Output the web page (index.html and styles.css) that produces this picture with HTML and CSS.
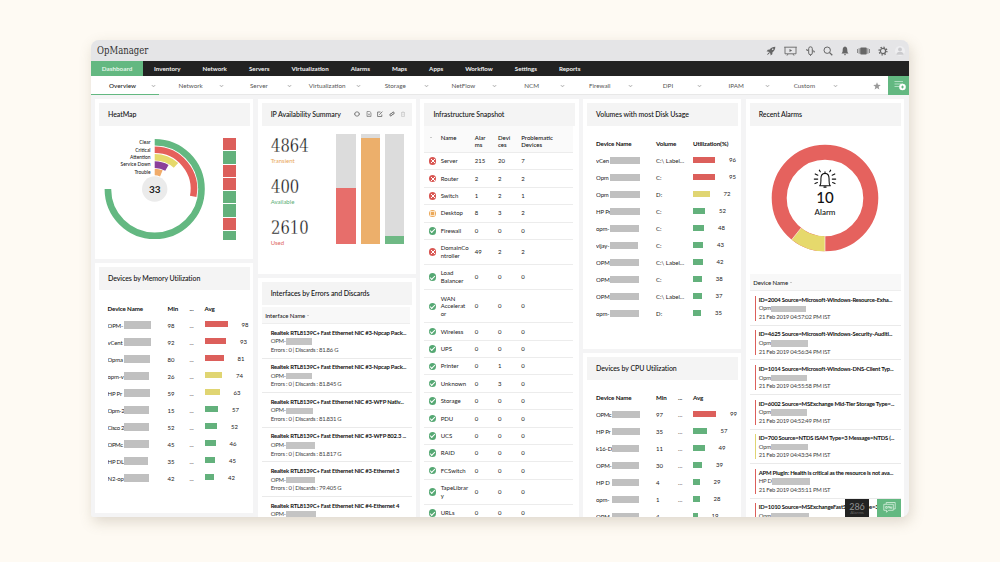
FILE: index.html
```html
<!DOCTYPE html>
<html lang="en">
<head>
<meta charset="utf-8">
<title>OpManager</title>
<link rel="stylesheet" href="styles.css">
</head>
<body>
<div class="window">
  <header class="top">
    <div class="brand">OpManager</div>
    <div class="tools">
      <svg width="10" height="10" viewBox="0 0 10 10"><path d="M9.3.7C6.8.7 5 1.700 3.700 3.500L1.800 3.700.6 5.400l1.700.1 2.200 2.200.1 1.700 1.700-1.200.2-1.900C8.300 5 9.300 3.200 9.300.7z" fill="#666"/><circle cx="6.700" cy="3.300" r=".8" fill="#e5e5e7"/><path d="M2.500 6.500L.8 9.200l2.700-1.700z" fill="#666"/></svg>
      <svg width="13" height="10" viewBox="0 0 13 10" fill="none" stroke="#666" stroke-width=".9"><path d="M.2 1.200h12.600M1 1.200v6.600h11V1.200M3 9.600l1-1.600M10 9.600L9 8"/><path d="M5.500 3v3l2.600-1.500z" fill="#666" stroke="none"/></svg>
      <svg width="9" height="10" viewBox="0 0 9 10" fill="none" stroke="#666" stroke-width="1"><path d="M2.700 7V2.600a1.800 1.800 0 0 1 3.600 0V7a1.800 1.800 0 0 1-3.600 0zM.8 3v1.400h1.400M8.200 6.500V5H6.800M4.500 8.500v1.300"/></svg>
      <svg width="10" height="10" viewBox="0 0 10 10" fill="none" stroke="#666"><circle cx="4.200" cy="4.200" r="3.200" stroke-width="1"/><path d="M6.600 6.600L9.300 9.300" stroke-width="1.300"/></svg>
      <svg width="8" height="10" viewBox="0 0 8 10" fill="#666"><path d="M4 .6c-1.800.4-2.300 2-2.300 3.400C1.700 6 1.200 6.500.5 7.600h7C6.800 6.500 6.300 6 6.300 4 6.300 2.600 5.800 1 4 .6zM3 8.200h2c0 1.400-2 1.400-2 0z"/></svg>
      <svg width="13" height="10" viewBox="0 0 13 10" fill="#666"><rect x="3.200" y="1.500" width="6.600" height="7" rx="1"/><path d="M1.700 2.300h.8v5.400h-.8zM.2 3h.7v4H.2zM10.500 2.300h.8v5.400h-.8zM12.100 3h.7v4h-.7z"/></svg>
      <svg width="10" height="10" viewBox="0 0 10 10" fill="none" stroke="#666"><circle cx="5" cy="5" r="2.600" stroke-width="1.200"/><circle cx="5" cy="5" r="3.900" stroke-width="1.300" stroke-dasharray="1.400 1.663"/></svg>
      <svg class="avatar" width="10" height="10" viewBox="0 0 10 10"><circle cx="5" cy="5" r="5" fill="#eeeef0"/><circle cx="5" cy="3.400" r="1.900" fill="#cbcbce"/><path d="M1.300 8.700c0-4 7.400-4 7.400 0z" fill="#cbcbce"/></svg>
    </div>
  </header>
  <nav class="nav">
    <a class="on">Dashboard</a><a>Inventory</a><a>Network</a><a>Servers</a><a>Virtualization</a><a>Alarms</a><a>Maps</a><a>Apps</a><a>Workflow</a><a>Settings</a><a>Reports</a>
  </nav>
  <div class="sub">
    <div class="tab on"><span>Overview</span><i class="chev"></i></div>
    <div class="tab"><span>Network</span><i class="chev"></i></div>
    <div class="tab"><span>Server</span><i class="chev"></i></div>
    <div class="tab"><span>Virtualization</span><i class="chev"></i></div>
    <div class="tab"><span>Storage</span><i class="chev"></i></div>
    <div class="tab"><span>NetFlow</span><i class="chev"></i></div>
    <div class="tab"><span>NCM</span><i class="chev"></i></div>
    <div class="tab"><span>Firewall</span><i class="chev"></i></div>
    <div class="tab"><span>DPI</span><i class="chev"></i></div>
    <div class="tab"><span>IPAM</span><i class="chev"></i></div>
    <div class="tab"><span>Custom</span><i class="chev"></i></div>
    <div class="end">
      <svg width="8" height="8" viewBox="0 0 8 8"><path d="M4 .2l1 2.600 2.800.1-2.200 1.800.8 2.800L4 5.900 1.600 7.500l.8-2.800L.2 2.900 3 2.800z" fill="#999"/></svg>
      <div class="add"><svg width="12" height="11" viewBox="0 0 12 11"><path d="M.5 1.500h8.500M.5 4h8.500M.5 6.500h5" stroke="#b9e2c8" stroke-width=".9"/><circle cx="8.500" cy="7" r="3.300" fill="#fff"/><path d="M8.500 5.600v2.800M7.100 7h2.800" stroke="#63b881" stroke-width="1"/></svg></div>
    </div>
  </div>

  <main class="board">
    <div class="col">
      <section class="card heat">
        <h2>HeatMap</h2>
        <div class="heatbody">
          <svg class="rings" width="108" height="104" viewBox="0 0 108 104">
            <g transform="translate(55.700 52)" fill="none" stroke-width="6.600">
              <path d="M0-46.800A46.800 46.800 0 1 1-46.800 0" stroke="#63b881"/>
              <path d="M0-39.200A39.200 39.200 0 0 1 38.480 7.480" stroke="#e5605b"/>
              <path d="M0-31.800A31.800 31.800 0 0 1 21.280-23.630" stroke="#e6d96c"/>
              <path d="M0-24.400A24.400 24.400 0 0 1 12.200-21.130" stroke="#8b3f9a"/>
              <path d="M0-17A17 17 0 0 1 6.640-15.650" stroke="#f0ab6a"/>
              <circle r="12.700" fill="#ebebeb" stroke="none"/>
            </g>
            <g class="ringlabels" text-anchor="end">
              <text x="51.500" y="7.300">Clear</text><text x="51.500" y="14.700">Critical</text><text x="51.500" y="22">Attention</text><text x="51.500" y="29.300">Service Down</text><text x="51.500" y="36.700">Trouble</text>
            </g>
            <text class="ringtotal" x="55.700" y="55.600" text-anchor="middle">33</text>
          </svg>
          <div class="squares"><i class="red"></i><i class="green"></i><i class="red"></i><i class="red"></i><i class="green"></i><i class="green"></i><i class="red"></i><i class="green last"></i></div>
        </div>
      </section>
      <section class="card memory">
        <h2>Devices by Memory Utilization</h2>
        <div class="util">
          <div class="r head"><b>Device Name</b><b>Min</b><b>...</b><b>Avg</b></div>
          <div class="r"><span class="nm"><em>OPM-</em><i style="width:27px"></i></span><span>98</span><span>...</span><span class="m"><i class="red" style="width:23px"></i>98</span></div>
          <div class="r"><span class="nm"><em>vCent</em><i style="width:27px"></i></span><span>92</span><span>...</span><span class="m"><i class="red" style="width:21.500px"></i>93</span></div>
          <div class="r"><span class="nm"><em>Opma</em><i style="width:26px"></i></span><span>80</span><span>...</span><span class="m"><i class="red" style="width:19px"></i>81</span></div>
          <div class="r"><span class="nm"><em>opm-v</em><i style="width:25px"></i></span><span>26</span><span>...</span><span class="m"><i class="yellow" style="width:17.500px"></i>74</span></div>
          <div class="r"><span class="nm"><em>HP Pr</em><i style="width:26px"></i></span><span>59</span><span>...</span><span class="m"><i class="yellow" style="width:15px"></i>63</span></div>
          <div class="r"><span class="nm tight"><em>Opm-2</em><i style="width:25px"></i></span><span>15</span><span>...</span><span class="m"><i class="green" style="width:13.500px"></i>57</span></div>
          <div class="r"><span class="nm tight"><em>Cisco 2</em><i style="width:25px"></i></span><span>52</span><span>...</span><span class="m"><i class="green" style="width:12.500px"></i>52</span></div>
          <div class="r"><span class="nm tight"><em>OPMc</em><i style="width:25px"></i></span><span>45</span><span>...</span><span class="m"><i class="green" style="width:11px"></i>46</span></div>
          <div class="r"><span class="nm"><em>HP DL</em><i style="width:24px"></i></span><span>35</span><span>...</span><span class="m"><i class="green" style="width:10.500px"></i>45</span></div>
          <div class="r"><span class="nm"><em>N2-op</em><i style="width:25px"></i></span><span>42</span><span>...</span><span class="m"><i class="green" style="width:9.500px"></i>42</span></div>
        </div>
      </section>
    </div>

    <div class="col">
      <section class="card ip">
        <h2>IP Availability Summary
          <span class="acts">
            <svg width="6" height="6" viewBox="0 0 6 6" fill="none" stroke="#666" stroke-width=".8"><circle cx="3" cy="3" r="2.200"/><path d="M0 3h1M5 3h1"/></svg>
            <svg width="6" height="6" viewBox="0 0 6 6" fill="none" stroke="#777" stroke-width=".7"><path d="M1 .5h2.800L5 1.700v3.800H1zM2 2.500l2 2M4 2.500l-2 2"/></svg>
            <svg width="6" height="6" viewBox="0 0 6 6" fill="none" stroke="#666" stroke-width=".8"><path d="M3.500 1H.6v4.500h4.200V3.500M2.300 3.800L5.400.6"/></svg>
            <svg width="6" height="6" viewBox="0 0 6 6" fill="none" stroke="#666" stroke-width="1"><path d="M2.500 2.700l1.300-1.500a1 1 0 0 1 1.300 1.400L3.300 3.800M3.500 3.300L2.200 4.800A1 1 0 0 1 .9 3.400L2.700 2.200"/></svg>
            <svg width="6" height="6" viewBox="0 0 6 6" fill="none" stroke="#ccc" stroke-width=".8"><path d="M1 1.500h4M1.500 1.500v4h3v-4M2.500.7h1M3 2.500v2"/></svg>
          </span>
        </h2>
        <div class="ipbody">
          <div class="nums">
            <div><strong>4864</strong><small class="t-orange">Transient</small></div>
            <div><strong>400</strong><small class="t-green">Available</small></div>
            <div><strong>2610</strong><small class="t-red">Used</small></div>
          </div>
          <div class="bars">
            <div><i style="height:51%;background:#e76e6b"></i></div>
            <div><i style="height:95.500%;background:#ecaf6b"></i></div>
            <div><i style="height:7.500%;background:#6fb985"></i></div>
          </div>
        </div>
      </section>
      <section class="card ifaces">
        <h2>Interfaces by Errors and Discards</h2>
        <div class="band">Interface Name <i class="caret"></i></div>
        <div class="list">
          <div class="it"><b>Realtek RTL8139C+ Fast Ethernet NIC #3-Npcap Pack...</b><p>OPM-<i style="width:26px"></i></p><p>Errors : 0 | Discards : 81.86 G</p></div>
          <div class="it"><b>Realtek RTL8139C+ Fast Ethernet NIC #3-Npcap Pack...</b><p>OPM-<i style="width:26px"></i></p><p>Errors : 0 | Discards : 81.845 G</p></div>
          <div class="it"><b>Realtek RTL8139C+ Fast Ethernet NIC #3-WFP Nativ...</b><p>OPM-<i style="width:27px"></i></p><p>Errors : 0 | Discards : 81.831 G</p></div>
          <div class="it"><b>Realtek RTL8139C+ Fast Ethernet NIC #3-WFP 802.3 ...</b><p>OPM-<i style="width:29px"></i></p><p>Errors : 0 | Discards : 81.817 G</p></div>
          <div class="it"><b>Realtek RTL8139C+ Fast Ethernet NIC #3-Ethernet 3</b><p>OPM-<i style="width:29px"></i></p><p>Errors : 0 | Discards : 79.405 G</p></div>
          <div class="it"><b>Realtek RTL8139C+ Fast Ethernet NIC #4-Ethernet 4</b><p>OPM-<i style="width:30px"></i></p></div>
        </div>
      </section>
    </div>

    <div class="col">
      <section class="card infra">
        <h2>Infrastructure Snapshot</h2>
        <div class="snap">
          <div class="s sh"><i class="caret"></i><b>Name</b><b>Alar<br>ms</b><b>Devi<br>ces</b><b>Problematic<br>Devices</b></div>
          <div class="s"><i class="st bad"></i><span>Server</span><span>215</span><span>20</span><span>7</span></div>
          <div class="s"><i class="st bad"></i><span>Router</span><span>2</span><span>2</span><span>2</span></div>
          <div class="s"><i class="st bad"></i><span>Switch</span><span>1</span><span>2</span><span>1</span></div>
          <div class="s"><i class="st warn"></i><span>Desktop</span><span>8</span><span>3</span><span>2</span></div>
          <div class="s"><i class="st ok"></i><span>Firewall</span><span>0</span><span>0</span><span>0</span></div>
          <div class="s"><i class="st bad"></i><span>DomainCo<br>ntroller</span><span>49</span><span>2</span><span>2</span></div>
          <div class="s"><i class="st ok"></i><span>Load<br>Balancer</span><span>0</span><span>0</span><span>0</span></div>
          <div class="s"><i class="st ok"></i><span>WAN<br>Accelerat<br>or</span><span>0</span><span>0</span><span>0</span></div>
          <div class="s"><i class="st ok"></i><span>Wireless</span><span>0</span><span>0</span><span>0</span></div>
          <div class="s"><i class="st ok"></i><span>UPS</span><span>0</span><span>0</span><span>0</span></div>
          <div class="s"><i class="st ok"></i><span>Printer</span><span>0</span><span>1</span><span>0</span></div>
          <div class="s"><i class="st ok"></i><span>Unknown</span><span>0</span><span>3</span><span>0</span></div>
          <div class="s"><i class="st ok"></i><span>Storage</span><span>0</span><span>0</span><span>0</span></div>
          <div class="s"><i class="st ok"></i><span>PDU</span><span>0</span><span>0</span><span>0</span></div>
          <div class="s"><i class="st ok"></i><span>UCS</span><span>0</span><span>0</span><span>0</span></div>
          <div class="s"><i class="st ok"></i><span>RAID</span><span>0</span><span>0</span><span>0</span></div>
          <div class="s"><i class="st ok"></i><span>FCSwitch</span><span>0</span><span>0</span><span>0</span></div>
          <div class="s"><i class="st ok"></i><span>TapeLibrar<br>y</span><span>0</span><span>0</span><span>0</span></div>
          <div class="s"><i class="st ok"></i><span>URLs</span><span>0</span><span>0</span><span>0</span></div>
        </div>
      </section>
    </div>

    <div class="col">
      <section class="card volumes">
        <h2>Volumes with most Disk Usage</h2>
        <div class="util vol">
          <div class="r head"><b>Device Name</b><b>Volume</b><b>Utilization(%)</b></div>
          <div class="r"><span class="nm"><em>vCen</em><i style="width:30px"></i></span><span>C:\ Label...</span><span class="m"><i class="red" style="width:22px"></i>96</span></div>
          <div class="r"><span class="nm"><em>Opm</em><i style="width:30px"></i></span><span>C:</span><span class="m"><i class="red" style="width:22px"></i>95</span></div>
          <div class="r"><span class="nm"><em>Opm</em><i style="width:30px"></i></span><span>D:</span><span class="m"><i class="yellow" style="width:16.500px"></i>72</span></div>
          <div class="r"><span class="nm"><em>HP Pr</em><i style="width:29.500px"></i></span><span>C:</span><span class="m"><i class="green" style="width:12px"></i>52</span></div>
          <div class="r"><span class="nm"><em>opm-</em><i style="width:29px"></i></span><span>C:</span><span class="m"><i class="green" style="width:11px"></i>48</span></div>
          <div class="r"><span class="nm"><em>vijay-</em><i style="width:28px"></i></span><span>C:</span><span class="m"><i class="green" style="width:10px"></i>43</span></div>
          <div class="r"><span class="nm"><em>OPM</em><i style="width:28.500px"></i></span><span>C:\ Label...</span><span class="m"><i class="green" style="width:9.500px"></i>42</span></div>
          <div class="r"><span class="nm"><em>OPM</em><i style="width:28.500px"></i></span><span>C:</span><span class="m"><i class="green" style="width:8.700px"></i>38</span></div>
          <div class="r"><span class="nm"><em>OPM</em><i style="width:28.500px"></i></span><span>C:\ Label...</span><span class="m"><i class="green" style="width:8.500px"></i>37</span></div>
          <div class="r"><span class="nm"><em>opm-</em><i style="width:29px"></i></span><span>D:</span><span class="m"><i class="green" style="width:8px"></i>35</span></div>
        </div>
      </section>
      <section class="card cpu">
        <h2>Devices by CPU Utilization</h2>
        <div class="util">
          <div class="r head"><b>Device Name</b><b>Min</b><b>...</b><b>Avg</b></div>
          <div class="r"><span class="nm tight"><em>OPMc</em><i style="width:28px"></i></span><span>97</span><span>...</span><span class="m"><i class="red" style="width:23px"></i>99</span></div>
          <div class="r"><span class="nm"><em>HP Pr</em><i style="width:28px"></i></span><span>35</span><span>...</span><span class="m"><i class="green" style="width:13.500px"></i>57</span></div>
          <div class="r"><span class="nm"><em>k16-D</em><i style="width:27px"></i></span><span>11</span><span>...</span><span class="m"><i class="green" style="width:11.500px"></i>49</span></div>
          <div class="r"><span class="nm"><em>OPM-</em><i style="width:27px"></i></span><span>30</span><span>...</span><span class="m"><i class="green" style="width:9px"></i>39</span></div>
          <div class="r"><span class="nm"><em>HP D</em><i style="width:27px"></i></span><span>4</span><span>...</span><span class="m"><i class="green" style="width:6.500px"></i>29</span></div>
          <div class="r"><span class="nm"><em>opm-</em><i style="width:27px"></i></span><span>1</span><span>...</span><span class="m"><i class="green" style="width:6.500px"></i>28</span></div>
          <div class="r"><span class="nm"><em>OPM</em><i style="width:27px"></i></span><span>4</span><span></span><span class="m"><i class="green" style="width:4.500px"></i>19</span></div>
        </div>
      </section>
    </div>

    <div class="col">
      <section class="card alarms">
        <h2>Recent Alarms</h2>
        <div class="donut">
          <svg width="108" height="108" viewBox="-54 -54 108 108">
            <circle r="45.800" fill="none" stroke="#e5625e" stroke-width="15"/>
            <path d="M0 45.800A45.800 45.800 0 0 1-28.600 35.770" fill="none" stroke="#e6d96c" stroke-width="15"/>
            <path d="M0 38v16M-23.700 29.700l-9.600 12" stroke="#fff" stroke-width=".6"/>
            <g fill="none" stroke="#111" stroke-width="1.100" stroke-linecap="round" stroke-linejoin="round"><path d="M-5.300-12.200h10.600C3.600-14.300 4.100-16 4.100-19c0-3.600-1.800-5.600-4.100-5.600S-4.100-22.600-4.100-19c0 3 .5 4.700-1.200 6.800zM0-24.800v-1.300M-1.100-10.900h2.200"/><path d="M-4.700-26.300l-1-1.600M-7.200-22.800l-2.600-1.300M-7.300-18.900h-3.400M-7.600-15.400l-2.400 1M4.700-26.300l1-1.600M7.200-22.800l2.600-1.300M7.300-18.900h3.400M7.600-15.400l2.400 1"/></g>
            <text class="d-num" x="0" y="5.300" text-anchor="middle">10</text>
            <text class="d-lab" x="0" y="16.600" text-anchor="middle">Alarm</text>
          </svg>
        </div>
        <div class="band">Device Name <i class="caret"></i></div>
        <div class="list">
          <div class="it"><b>ID=2004 Source=Microsoft-Windows-Resource-Exha...</b><p>Opm<i style="width:35px"></i></p><p>21 Feb 2019 04:57:02 PM IST</p></div>
          <div class="it"><b>ID=4625 Source=Microsoft-Windows-Security-Auditi...</b><p>Opm<i style="width:37px"></i></p><p>21 Feb 2019 04:56:34 PM IST</p></div>
          <div class="it"><b>ID=1014 Source=Microsoft-Windows-DNS-Client Typ...</b><p>Opm<i style="width:36px"></i></p><p>21 Feb 2019 04:55:58 PM IST</p></div>
          <div class="it"><b>ID=6002 Source=MSExchange Mid-Tier Storage Type=...</b><p>Opm<i style="width:36px"></i></p><p>21 Feb 2019 04:52:49 PM IST</p></div>
          <div class="it y"><b>ID=700 Source=NTDS ISAM Type=3 Message=NTDS (...</b><p>Opm<i style="width:37px"></i></p><p>21 Feb 2019 04:43:34 PM IST</p></div>
          <div class="it"><b>APM Plugin: Health is critical as the resource is not ava...</b><p>HP D<i style="width:38px"></i></p><p>21 Feb 2019 04:35:11 PM IST</p></div>
          <div class="it"><b>ID=1010 Source=MSExchangeFastSearch Type=3 M...</b><p>Opm<i style="width:38px"></i></p></div>
        </div>
      </section>
    </div>
  </main>
  <div class="float">
    <div class="count"><b>286</b><span>Alarms</span></div>
    <div class="chat"><svg width="13" height="13" viewBox="0 0 13 13" fill="none" stroke="#d9f0e0" stroke-width=".8"><path d="M3.200 3V1.500h9v6.500h-1.500"/><path d="M.8 3.300h9.500v6H5.500l-2 2v-2H.8z"/><path d="M2.700 5.500h1.500v1.800H2.700zM5.200 7.300V5.500h1.300v1.800M7.500 5.500v1.800h1.200V5.500"/></svg></div>
  </div>
</div>
</body>
</html>
```

FILE: styles.css
```css
* { box-sizing: border-box; }
body {
  margin: 0;
  width: 1000px;
  height: 562px;
  overflow: hidden;
  padding: 40px 91px 0;
  background: #fefaf3;
  font-family: Lato, "Open Sans", sans-serif;
  font-size: 6px;
  color: #333;
}
i, em { font-style: normal; }
svg { display: block; }
.window {
  position: relative;
  width: 818px;
  height: 477px;
  overflow: hidden;
  display: flex;
  flex-direction: column;
  border-radius: 8px 8px 8px 2px;
  background: #f4f4f5;
  box-shadow: 2px 5px 14px rgba(110, 95, 70, .22);
}

/* header */
.top {
  flex: 0 0 21px;
  display: flex;
  justify-content: space-between;
  align-items: center;
  padding: 0 4px 0 6px;
  background: #e5e5e7;
}
.brand {
  font-family: "DejaVu Serif", serif;
  font-size: 10.500px;
  line-height: 18px;
  height: 20px;
  color: #333;
  transform: scaleX(.81);
  transform-origin: left;
}
.tools { display: flex; align-items: center; gap: 8.100px; }
.tools .avatar { margin-left: -1px; }

/* primary navigation */
.nav {
  flex: 0 0 15px;
  display: flex;
  background: #222;
  color: #f2f2f2;
  font-size: 6.200px;
  font-weight: 700;
  line-height: 15px;
}
.nav a { padding: 0 11.030px; }
.nav .on { background: #63b881; color: #e3f5e9; width: 52px; padding: 0; text-align: center; font-size: 6.300px; }

/* dashboard tabs */
.sub {
  flex: 0 0 19px;
  display: flex;
  background: #fff;
  border-bottom: 1px solid #e8e8e8;
}
.tab {
  flex: 0 0 68.200px;
  display: flex;
  align-items: center;
  font-size: 6.300px;
  color: #555;
}
.tab.on { border-bottom: 1px solid #63b881; color: #222; font-weight: 500; margin-bottom: -1px; }
.tab span { width: 61px; padding-left: 2px; text-align: center; line-height: 17px; }
.chev { width: 3px; height: 3px; border: solid #b5b5b5; border-width: 0 1px 1px 0; transform: scaleY(.65) rotate(45deg); }
.end { margin-left: auto; display: flex; align-items: center; gap: 7px; margin-bottom: -1px; }
.add { width: 21px; height: 19px; background: #63b881; display: grid; place-items: center; padding-left: 2px; }

/* board */
.board {
  flex: 1;
  min-height: 0;
  display: grid;
  grid-template-columns: repeat(5, 158.300px);
  gap: 4.400px;
  padding: 4px 4px 0;
}
.col { display: flex; flex-direction: column; gap: 4px; min-height: 0; }
.card { flex: none; background: #fff; padding: 4px 3.500px 0 4px; }
.card h2 {
  margin: 0;
  height: 22.500px;
  padding: 0 9px;
  display: flex;
  align-items: center;
  justify-content: space-between;
  background: #f4f4f4;
  font-size: 7px;
  font-weight: 500;
  letter-spacing: -.07px;
  color: #111;
  white-space: nowrap;
}
.red { background: #dc5f5b; }
.green { background: #63b17c; }
.yellow { background: #e0d572; }

/* heat map */
.heat { height: 160px; }
.heatbody { display: flex; justify-content: space-between; padding: 11px 14px 0 0; }
.ringlabels text { font-size: 4.900px; font-weight: 500; fill: #222; }
.ringtotal { font-size: 10px; font-weight: 700; fill: #222; }
.squares { width: 12.700px; padding-top: 1.500px; display: flex; flex-direction: column; gap: 1px; }
.squares i { height: 12.300px; flex: none; }
.squares .last { height: 9px; }

/* utilization tables */
.util { padding: 9.500px 0 0 9px; color: #222; }
.memory .util { padding-left: 8.500px; padding-top: 10px; }
.r { display: grid; grid-template-columns: 60px 22px 15px 1fr; height: 17px; align-items: center; white-space: nowrap; }
.vol .r { grid-template-columns: 60px 37px 1fr; }
.head b { font-weight: 700; color: #111; font-size: 6.200px; letter-spacing: -.12px; }
.nm { display: flex; align-items: center; }
.nm em { width: 16px; overflow: hidden; letter-spacing: -.15px; }
.nm.tight em { letter-spacing: -.4px; }
.nm i { height: 7.500px; background: #c0c0c0; }
.m { display: flex; align-items: center; gap: 14px; position: relative; top: -1px; }
.m i { height: 6px; }
.vol .nm em { width: 14px; }
.memory { height: 249.500px; }
.volumes { height: 250px; }
.cpu { height: 170px; }

/* ip summary */
.ip { height: 175px; }
.ip h2 { padding-right: 6px; }
.acts { display: flex; gap: 5.500px; }
.ipbody { display: flex; justify-content: space-between; padding: 8px 8px 0 9px; }
.nums { width: 40px; }
.nums div { height: 41px; padding-top: 2px; }
.nums strong {
  display: block;
  font-family: "DejaVu Serif", serif;
  font-weight: 400;
  font-size: 18.500px;
  line-height: 20px;
  color: #111;
  transform: scaleX(.8);
  transform-origin: left;
  -webkit-text-stroke: .3px #fff;
}
.nums small { display: block; font-size: 6px; line-height: 9px; }
.t-orange { color: #e9a758; }
.t-green { color: #5aae75; }
.t-red { color: #dd6562; }
.bars { display: flex; gap: 4.700px; height: 110.500px; }
.bars div { width: 19.600px; background: #dcdcdc; display: flex; align-items: flex-end; }
.bars i { width: 100%; }

/* lists */
.ifaces { height: 261px; }
.band {
  height: 17px;
  padding: 0 3.500px;
  display: flex;
  align-items: center;
  gap: 2px;
  background: #f8f8f8;
  border-bottom: 1px solid #eee;
  color: #222;
  font-weight: 500;
  letter-spacing: -.05px;
}
.caret { width: 0; height: 0; border: 1.500px solid transparent; border-bottom-color: #999; border-top: 0; }
.ifaces .band { margin-top: 2.500px; margin-right: 2px; }
.it {
  height: 34.600px;
  padding: 4.700px 0 0 9px;
  border-bottom: 1px solid #eaeaea;
  white-space: nowrap;
  line-height: 8.600px;
  font-size: 5.900px;
  color: #444;
}
.it b { display: block; font-weight: 700; color: #111; letter-spacing: -.2px; }
.it p { margin: 0; display: flex; align-items: center; letter-spacing: -.25px; }
.it p i { height: 6.500px; background: #c4c4c4; }

/* infrastructure */
.infra { height: 430px; }
.snap { padding: 0 2px 0 0; font-size: 6px; line-height: 7.800px; color: #222; }
.s {
  display: grid;
  grid-template-columns: 11.800px 34.200px 23.200px 23.200px 1fr;
  align-items: center;
  padding: 4.300px 0 4.300px 4.500px;
  border-bottom: 1px solid #ececec;
}
.sh { background: #fafafa; align-items: start; padding: 8px 0 3.500px 4.500px; }
.sh b { font-weight: 500; color: #111; line-height: 7.500px; }
.sh .caret { margin: 3px 0 0 1px; }
.st { width: 7.500px; height: 7.500px; border-radius: 50%; display: grid; place-items: center; margin: -.5px 0; }
.st::before { content: ""; display: block; }
.st.bad { background: #d95753; }
.st.bad::before { width: 4px; height: 4px; background: linear-gradient(45deg, transparent 41%, #fff 41% 59%, transparent 59%), linear-gradient(-45deg, transparent 41%, #fff 41% 59%, transparent 59%); }
.st.warn { background: #eba859; }
.st.warn::before { width: 3.500px; height: 3.500px; border: 1px solid #fbe3c5; }
.st.ok { background: #55a873; }
.st.ok::before { width: 4px; height: 2.200px; border: solid #fff; border-width: 0 0 1px 1px; transform: translateY(-.4px) rotate(-45deg); }

/* alarms */
.alarms { height: 430px; }
.donut { height: 148.700px; padding: 18.500px 0 0 21.700px; }
.d-num { font-size: 15px; font-weight: 500; fill: #111; }
.d-lab { font-size: 8px; font-weight: 500; fill: #111; }
.alarms .it {
  background: linear-gradient(#dc5f5b, #dc5f5b) 5px 4.700px / 1.300px 25px no-repeat;
}
.alarms .it.y { background-image: linear-gradient(#e0d572, #e0d572); }
.alarms .it b { letter-spacing: -.22px; }

/* floating buttons over the board */
.float { position: absolute; right: 8px; bottom: 0; display: flex; gap: 8px; }
.count, .chat { width: 24px; height: 18.500px; }
.count { background: #222; color: #8b8b8b; text-align: center; line-height: 1; padding-top: 3px; }
.count b { display: block; font-size: 9px; font-weight: 500; }
.count span { display: block; font-size: 4.500px; color: #666; }
.chat { background: #63b881; display: grid; place-items: center; }
```
